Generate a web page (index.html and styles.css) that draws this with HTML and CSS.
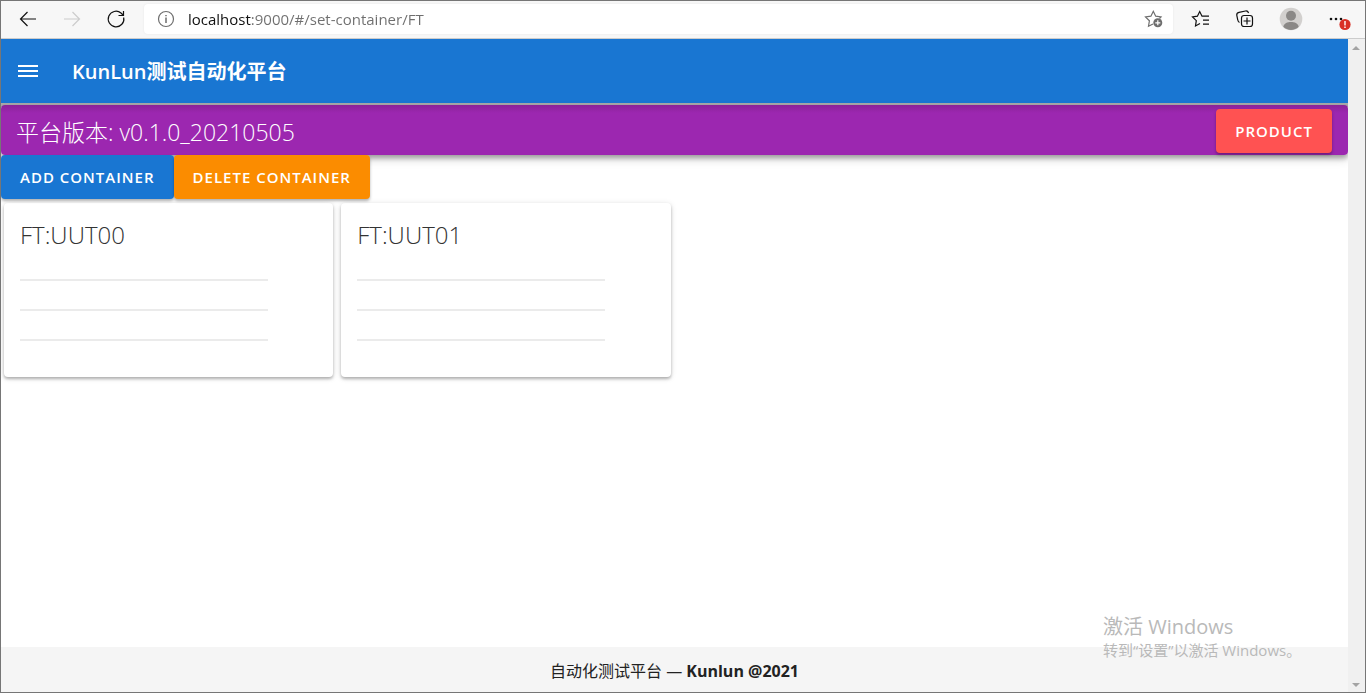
FILE: index.html
```html
<!DOCTYPE html>
<html lang="zh-CN">
<head>
<meta charset="utf-8">
<meta name="viewport" content="width=device-width, initial-scale=1">
<title>KunLun测试自动化平台</title>
<link rel="stylesheet" href="styles.css">
</head>
<body class="window">
<div class="toolbar">
  <div class="nav-buttons">
    <button class="tool" aria-label="Back"><svg width="20" height="20" viewBox="0 0 20 20"><path d="M18 10H2.500M9.500 3L2.500 10L9.500 17"/></svg></button>
    <button class="tool tool-off" aria-label="Forward" disabled><svg width="20" height="20" viewBox="0 0 20 20"><path d="M2 10H17.500M10.500 3L17.500 10L10.500 17"/></svg></button>
    <button class="tool" aria-label="Refresh"><svg width="20" height="20" viewBox="0 0 20 20"><path d="M17.700 8.500A7.800 7.800 0 1 1 15 4L17 6M17.500 2V6.500H12.500"/></svg></button>
  </div>
  <div class="address">
    <button class="tool tool-gray" aria-label="Site information"><svg width="20" height="20" viewBox="0 0 20 20"><circle cx="10" cy="10" r="7.500"/><path d="M10 8.500V14M10 6V7.300" stroke-width="1.500"/></svg></button>
    <input class="url" type="text" aria-label="Address" value="localhost:9000/#/set-container/FT">
    <button class="tool tool-gray" aria-label="Add to favorites"><svg width="20" height="20" viewBox="0 0 20 20"><path d="M9 15L4.500 17.300L5.400 11.800L1.500 7.900L6.900 7.200L9.300 2.300L11.700 7.200L17 7.900L15.500 9.500"/><circle cx="13.800" cy="13.800" r="4.500" fill="#6e6e6e" stroke="none"/><path d="M13.800 11.300V16.300M11.300 13.800H16.300" stroke="#fff"/></svg></button>
  </div>
  <div class="tools">
    <button class="tool" aria-label="Favorites"><svg width="20" height="20" viewBox="0 0 20 20"><path d="M9 14.500L4.500 17L5.300 11.700L1.500 7.900L6.400 7.200L8.700 2.500L11 7.200H18M12 11.200H18M12 15.200H18"/></svg></button>
    <button class="tool" aria-label="Collections"><svg width="20" height="20" viewBox="0 0 20 20"><path d="M4.500 13.500C3.500 13 3 12.200 2.800 11L1.800 6.500C1.500 4.700 2.200 3.700 4 3.300L10.500 2C12.200 1.700 13 2.300 13.600 4"/><rect x="6.500" y="6.500" width="11" height="11" rx="2.500"/><path d="M12 8.500V15.500M8.500 12H15.500"/></svg></button>
    <button class="tool" aria-label="Profile"><svg width="24" height="24" viewBox="0 0 24 24" stroke="none"><circle cx="12" cy="12" r="11.300" fill="#d2d0ce"/><circle cx="12" cy="8.700" r="5" fill="#8a8886"/><path fill="#8a8886" d="M4.300 19.800C5 16.300 8.500 15 12 15S19 16.300 19.700 19.800A11 11 0 0 1 4.300 19.800Z"/></svg></button>
    <button class="tool" aria-label="Settings and more"><svg width="24" height="24" viewBox="0 0 24 24" stroke="none"><g fill="#111"><circle cx="4" cy="12" r="1.300"/><circle cx="9" cy="12" r="1.300"/><circle cx="14" cy="12" r="1.300"/></g><circle cx="18" cy="17.500" r="5.600" fill="#d93025"/><path d="M18 14V18.500M18 19.500V21" stroke="#fff" stroke-width="1.400"/></svg></button>
  </div>
</div>
<div class="viewport">
  <div class="app">
    <header class="app-bar">
      <button class="menu" aria-label="Menu"><svg width="24" height="24" viewBox="0 0 24 24"><path fill="#fff" d="M2 6H22V8H2ZM2 11H22V13H2ZM2 16H22V18H2Z"/></svg></button>
      <h1 class="app-title">KunLun测试自动化平台</h1>
    </header>
    <main class="content">
      <section class="banner">
        <h2 class="version">平台版本: v0.1.0_20210505</h2>
        <button class="btn btn-red">PRODUCT</button>
      </section>
      <div class="actions">
        <button class="btn btn-blue">ADD CONTAINER</button>
        <button class="btn btn-orange">DELETE CONTAINER</button>
      </div>
      <div class="cards">
        <article class="card">
          <h3 class="card-title">FT:UUT00</h3>
          <div class="rows"><hr class="rule"><hr class="rule"><hr class="rule"></div>
        </article>
        <article class="card">
          <h3 class="card-title">FT:UUT01</h3>
          <div class="rows"><hr class="rule"><hr class="rule"><hr class="rule"></div>
        </article>
      </div>
    </main>
    <footer class="footer">自动化测试平台 — <strong class="brand">Kunlun @2021</strong></footer>
  </div>
  <div class="scrollbar">
    <svg width="16" height="16" viewBox="0 0 16 16"><path fill="#a3a3a3" d="M4 11L8 7L12 11Z"/></svg>
    <svg width="16" height="16" viewBox="0 0 16 16"><path fill="#a3a3a3" d="M4 7L8 11L12 7Z"/></svg>
  </div>
</div>
<div class="watermark">
  <p class="mark-title">激活 Windows</p>
  <p class="mark-text">转到“设置”以激活 Windows。</p>
</div>
</body>
</html>
```

FILE: styles.css
```css
* { box-sizing: border-box; }

.window {
  display: flex;
  flex-direction: column;
  min-height: 100vh;
  margin: 0;
  border: 1px solid #767676;
  background: #fff;
  color: #222;
  font-family: "Open Sans", "Noto Sans CJK SC", sans-serif;
}

button { border: 0; background: none; padding: 0; font: inherit; }
h1, h2, h3, p { margin: 0; }

.toolbar {
  display: flex;
  align-items: center;
  height: 38px;
  padding-bottom: 2px;
  border-bottom: 1px solid #ccc;
  background: #f7f7f7;
}
.nav-buttons { display: flex; gap: 24px; padding: 0 18px 0 17px; }
.tool { display: flex; flex: none; }
.tool svg { fill: none; stroke: #111; stroke-width: 1.2; }
.tool svg[stroke="none"] { stroke: none; }
.tool-off svg { stroke: #ccc; }
.tool-gray svg { stroke: #6e6e6e; }
.address {
  display: flex;
  flex: 1;
  align-items: center;
  gap: 12px;
  height: 30px;
  padding: 0 9px 0 12px;
  border-radius: 4px;
  background: #fff;
  box-shadow: 0 0 2px #e4e4e4;
}
.url {
  flex: 1;
  min-width: 0;
  padding: 0;
  border: 0;
  outline: 0;
  background: linear-gradient(90deg, #111 63px, #6e6e6e 63px);
  background-clip: text;
  -webkit-background-clip: text;
  color: transparent;
  font-family: "Open Sans", sans-serif;
  font-size: 15px;
  line-height: 24px;
}
.tools { display: flex; align-items: center; gap: 24px; padding: 0 14px 0 18px; }

.viewport { display: flex; flex: 1; }
.app { display: flex; flex: 1; flex-direction: column; min-width: 0; }
.scrollbar {
  display: flex;
  flex: none;
  flex-direction: column;
  justify-content: space-between;
  width: 17px;
  background: #f0f0f0;
}

.app-bar {
  display: flex;
  align-items: center;
  gap: 32px;
  height: 64px;
  padding: 0 15px;
  background: #1976d2;
  color: #fff;
}
.menu { display: flex; }
.app-title, .version { padding-top: 2px; line-height: 32px; }
.app-title { font-size: 20px; font-weight: 600; }

.content { flex: 1; padding-top: 2px; background: linear-gradient(#aaa 4px, #fff 4px); }
.banner {
  display: flex;
  align-items: center;
  justify-content: space-between;
  height: 50px;
  padding: 1px 16px 0 15px;
  border-radius: 4px;
  background: linear-gradient(#8a2399, #9c27b0 8px);
  box-shadow: 0 3px 5px rgba(0, 0, 0, .3), 0 5px 10px rgba(0, 0, 0, .14);
  color: #fff;
}
.version { font-size: 23px; font-weight: 300; }

.btn {
  height: 44px;
  padding: 0 19px;
  border-radius: 4px;
  box-shadow: 0 2px 3px rgba(0, 0, 0, .3);
  color: #fff;
  font-size: 15px;
  font-weight: 600;
  letter-spacing: 1px;
}
.btn-red { background: #ff5252; }
.btn-blue { background: #1976d2; }
.btn-orange { background: #fb8c00; }
.actions { position: relative; display: flex; }

.cards {
  display: grid;
  grid-template-columns: repeat(4, 1fr);
  gap: 8px;
  padding: 4px 3px;
}
.card {
  padding: 16px 16px 36px;
  border-radius: 4px;
  background: #fff;
  box-shadow: 0 2px 3px rgba(0, 0, 0, .26), 0 1px 6px rgba(0, 0, 0, .12);
}
.card-title { color: #333; font-size: 24px; font-weight: 300; line-height: 32px; }
.rows { display: grid; gap: 28px; width: 83.33%; padding-top: 28px; }
.rule { width: 100%; height: 2px; margin: 0; border: 0; background: #ebebeb; }

.footer {
  padding: 12px 16px 9px;
  background: #f5f5f5;
  font-size: 16px;
  line-height: 24px;
  text-align: center;
}
.brand { font-weight: 700; }

.watermark {
  position: absolute;
  right: 63px;
  bottom: 33px;
  width: 200px;
  color: #b9b9b9;
  white-space: nowrap;
  pointer-events: none;
}
.mark-title { font-size: 20px; line-height: 26px; }
.mark-text { font-size: 15px; line-height: 20px; }
```
